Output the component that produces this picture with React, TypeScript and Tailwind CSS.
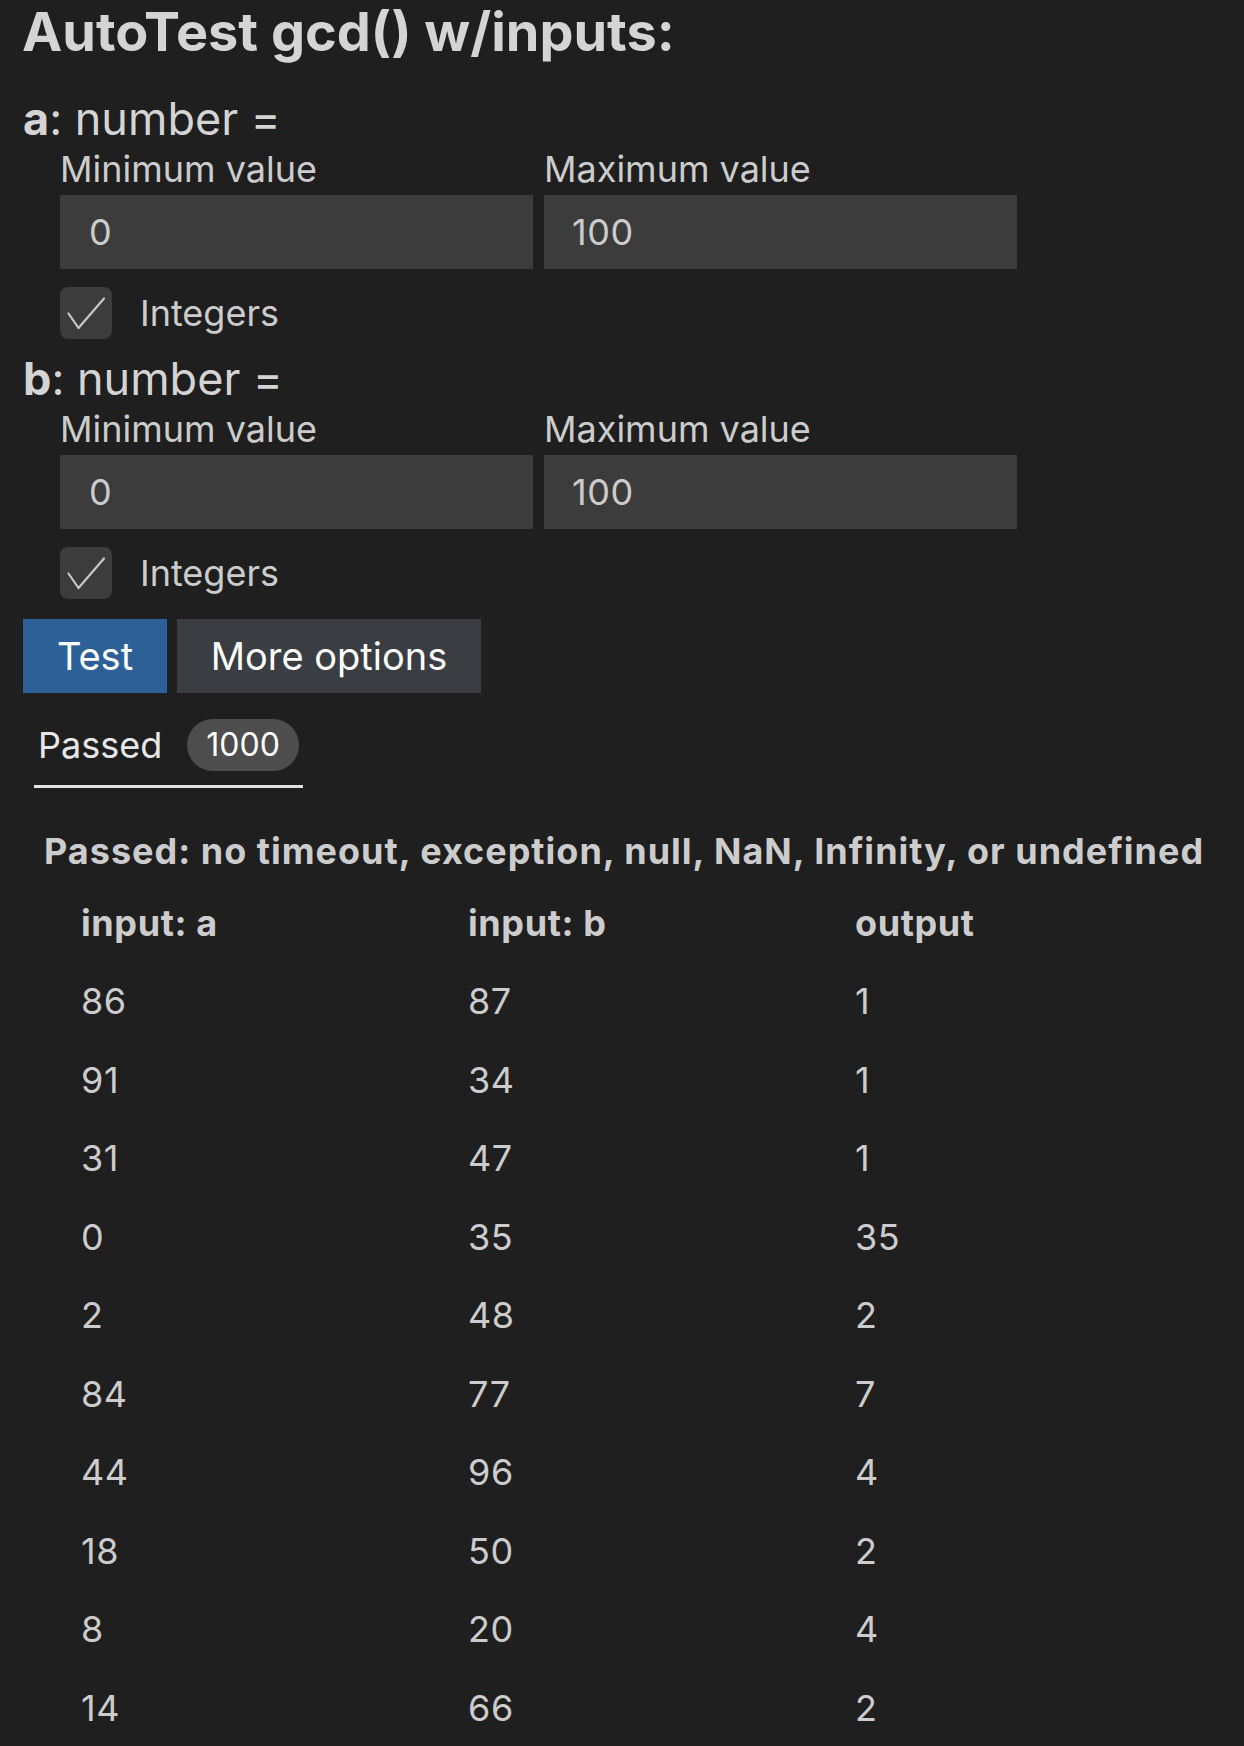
import React from "react";

const rows: [string, string, string][] = [
  ["86", "87", "1"],
  ["91", "34", "1"],
  ["31", "47", "1"],
  ["0", "35", "35"],
  ["2", "48", "2"],
  ["84", "77", "7"],
  ["44", "96", "4"],
  ["18", "50", "2"],
  ["8", "20", "4"],
  ["14", "66", "2"],
];

function Check() {
  return (
    <div className="w-[52px] h-[52px] rounded-[8px] bg-[#3c3c3c] flex items-center justify-center shrink-0">
      <svg width="52" height="52" viewBox="0 0 52 52" fill="none">
        <polyline
          points="8.5,26.5 18.5,41 44,11.5"
          stroke="#c8c8c8"
          strokeWidth="2.2"
          strokeLinecap="round"
          strokeLinejoin="round"
          fill="none"
        />
      </svg>
    </div>
  );
}

function Param({ name }: { name: string }) {
  return (
    <div className="flex flex-col">
      <div className="h-[55px] text-[45px] leading-[54px] text-[#d4d4d4] pl-[1px]">
        <span className="font-bold">{name}</span>: number =
      </div>
      <div className="ml-[38px] w-[957px] grid grid-cols-2 gap-x-[11px]">
        <div className="text-[36px] leading-[44px] text-[#cccccc]">Minimum value</div>
        <div className="text-[36px] leading-[44px] text-[#cccccc]">Maximum value</div>
        <div className="mt-[4px] h-[74px] bg-[#3c3c3c] pl-[29px] text-[36px] leading-[74px] tracking-[0.6px] text-[#cccccc]">0</div>
        <div className="mt-[4px] h-[74px] bg-[#3c3c3c] pl-[28px] text-[36px] leading-[74px] tracking-[0.6px] text-[#cccccc]">100</div>
      </div>
      <div className="ml-[38px] mt-[18px] flex items-center gap-[28px]">
        <Check />
        <span className="text-[36px] leading-[52px] text-[#cccccc]">Integers</span>
      </div>
    </div>
  );
}

export default function App() {
  return (
    <div
      className="min-h-[1746px] w-full bg-[#1f1f1f] pl-[22px] text-[#cccccc] overflow-hidden"
      style={{ fontFamily: "Inter, 'Noto Sans', sans-serif" }}
    >
      <h1 className="h-[64px] text-[54px] leading-[64px] font-bold text-[#d4d4d4] tracking-[0px] whitespace-nowrap">
        AutoTest gcd() w/inputs:
      </h1>
      <div className="mt-[28px] flex flex-col gap-[13px]">
        <Param name="a" />
        <Param name="b" />
      </div>
      <div className="mt-[20px] flex gap-[10px] pl-[1px]">
        <button className="h-[74px] w-[144px] bg-[#2c6097] text-white text-[38px] leading-[74px] text-center">
          Test
        </button>
        <button className="h-[74px] w-[304px] bg-[#3a3d41] text-white text-[38px] leading-[74px] text-center">
          More options
        </button>
      </div>
      <div className="mt-[26px] ml-[12px] inline-flex items-center gap-[25px] px-[4px] pb-[14px] border-b-[3px] border-[#e2e2e2]">
        <span className="text-[36px] leading-[52px] text-[#e7e7e7]">Passed</span>
        <span className="h-[52px] rounded-full bg-[#4d4d4d] px-[19px] text-[32px] leading-[52px] text-white">
          1000
        </span>
      </div>
      <div className="mt-[42px] ml-[22px] text-[36px] leading-[42px] font-bold tracking-[1px] text-[#cccccc] whitespace-nowrap">
        Passed: no timeout, exception, null, NaN, Infinity, or undefined
      </div>
      <div className="mt-[12px] ml-[59px] grid grid-cols-[387px_387px_387px] tracking-[0.6px]">
        <div className="h-[78px] text-[36px] leading-[78px] font-bold">input: a</div>
        <div className="h-[78px] text-[36px] leading-[78px] font-bold">input: b</div>
        <div className="h-[78px] text-[36px] leading-[78px] font-bold">output</div>
        {rows.map((r, i) => (
          <React.Fragment key={i}>
            <div className="h-[78.5px] text-[36px] leading-[78.5px]">{r[0]}</div>
            <div className="h-[78.5px] text-[36px] leading-[78.5px]">{r[1]}</div>
            <div className="h-[78.5px] text-[36px] leading-[78.5px]">{r[2]}</div>
          </React.Fragment>
        ))}
      </div>
    </div>
  );
}
